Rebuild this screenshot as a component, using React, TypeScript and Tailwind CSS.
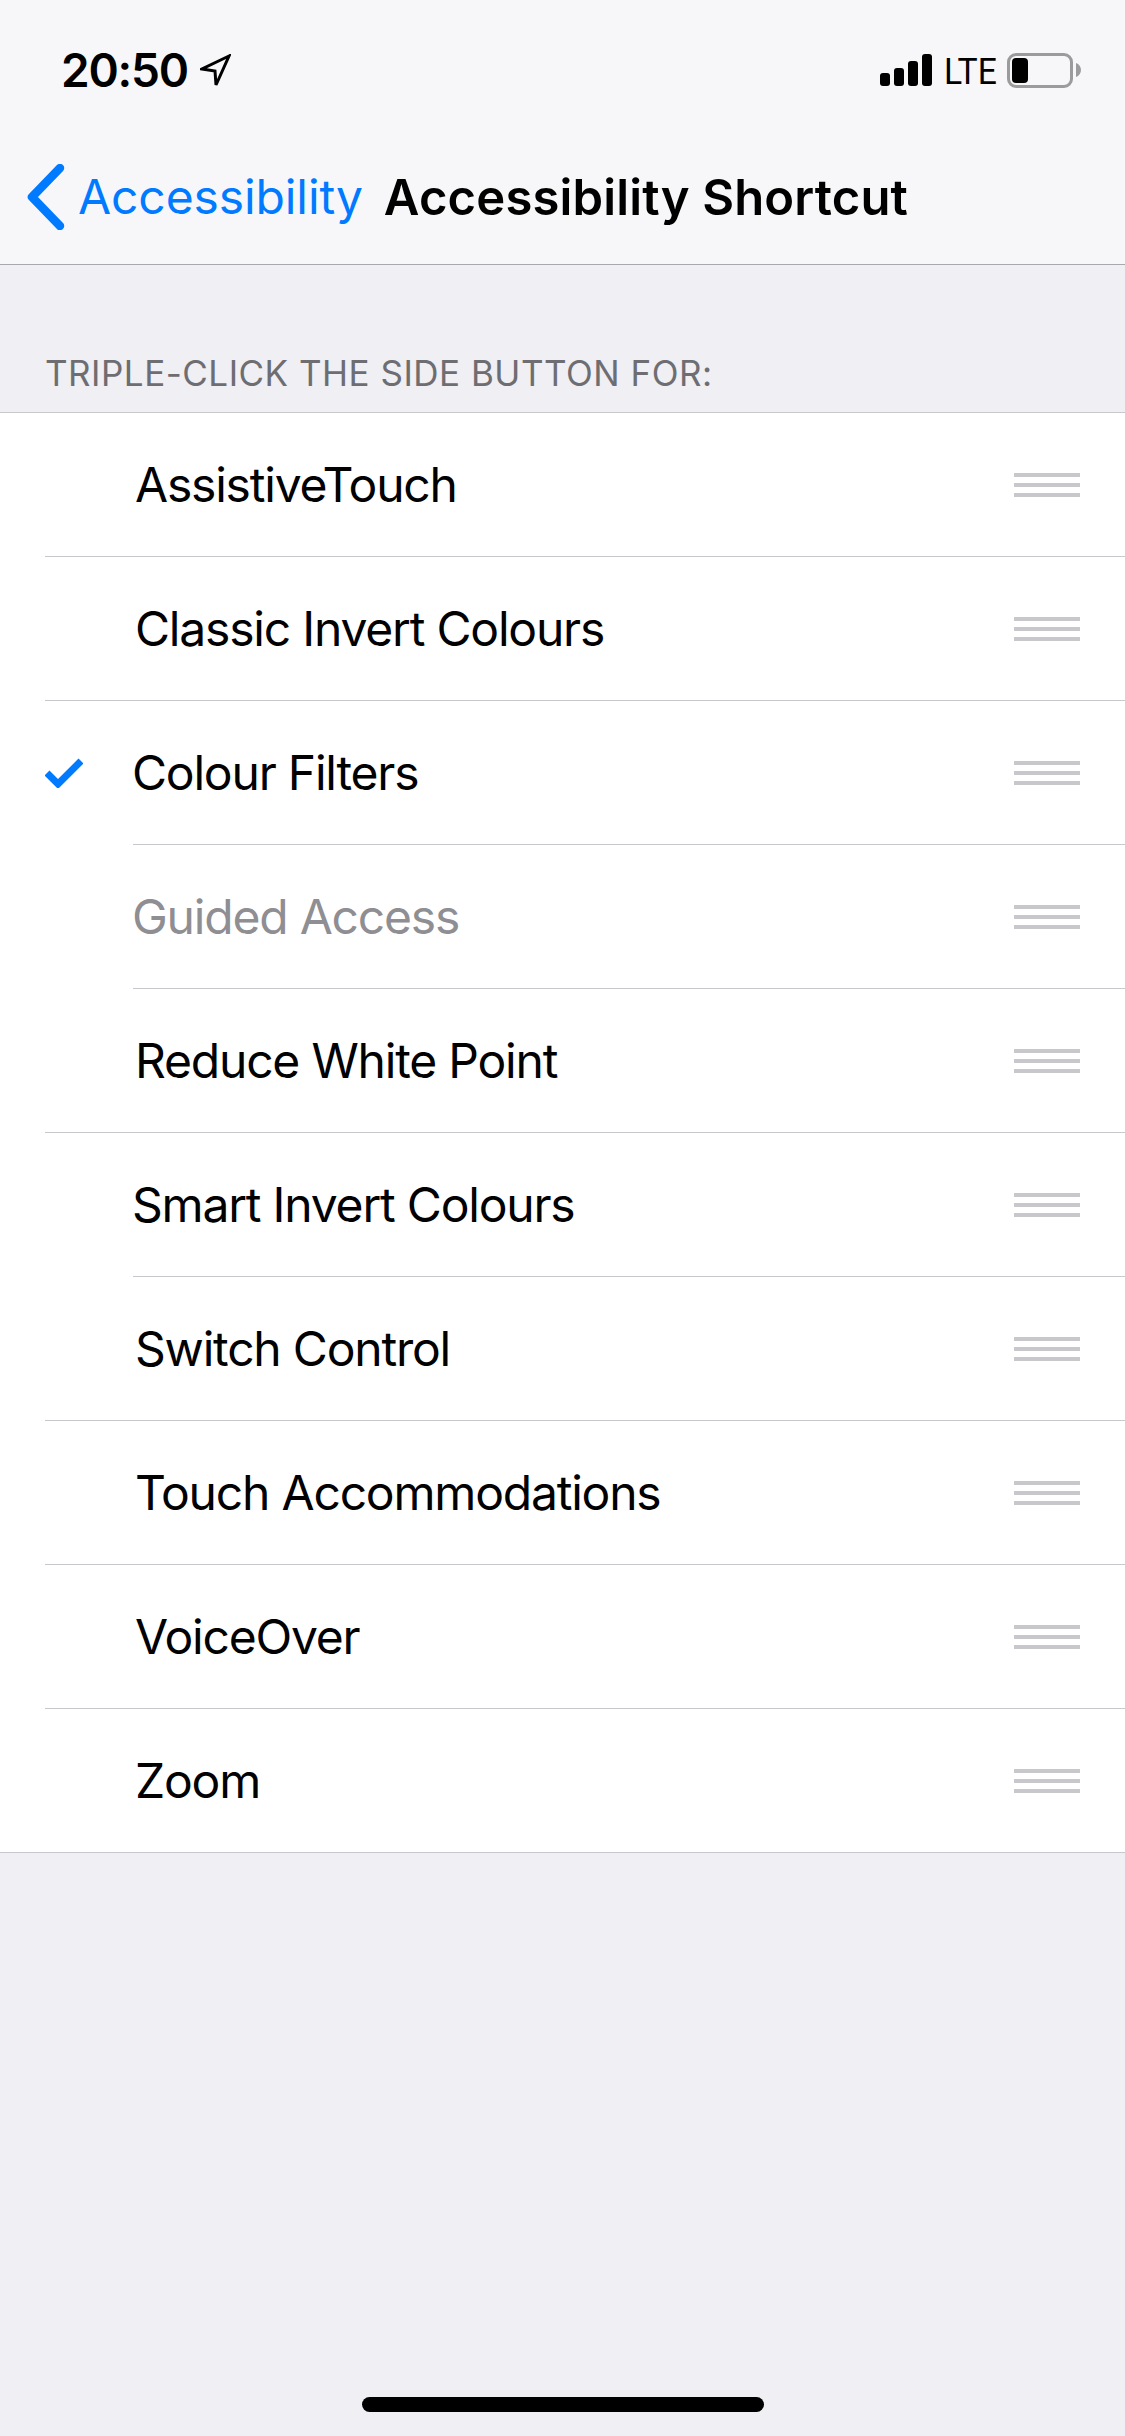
import React from 'react';

interface ShortcutRow {
  label: string;
  gutter: string;
  separator: string;
  checked?: boolean;
  disabled?: boolean;
}

const rows: ShortcutRow[] = [
  { label: 'AssistiveTouch', gutter: 'w-[135px]', separator: 'ml-[45px]' },
  { label: 'Classic Invert Colours', gutter: 'w-[135px]', separator: 'ml-[45px]' },
  { label: 'Colour Filters', gutter: 'w-[132px]', separator: 'ml-[133px]', checked: true },
  { label: 'Guided Access', gutter: 'w-[132px]', separator: 'ml-[133px]', disabled: true },
  { label: 'Reduce White Point', gutter: 'w-[135px]', separator: 'ml-[45px]' },
  { label: 'Smart Invert Colours', gutter: 'w-[132px]', separator: 'ml-[133px]' },
  { label: 'Switch Control', gutter: 'w-[135px]', separator: 'ml-[45px]' },
  { label: 'Touch Accommodations', gutter: 'w-[135px]', separator: 'ml-[45px]' },
  { label: 'VoiceOver', gutter: 'w-[135px]', separator: 'ml-[45px]' },
  { label: 'Zoom', gutter: 'w-[135px]', separator: 'ml-0' },
];

function LocationArrow() {
  return (
    <svg width="31" height="34" viewBox="0 0 31 34" className="ml-[12px] mt-[10px]">
      <path d="M29 2 L2 15 L15 17 L16 31 Z" fill="none" stroke="#000" strokeWidth="3" strokeLinejoin="miter" />
    </svg>
  );
}

function SignalBars() {
  return (
    <div className="flex items-end gap-[4px]">
      <div className="w-[10px] h-[13px] rounded-[3px] bg-black" />
      <div className="w-[10px] h-[18px] rounded-[3px] bg-black" />
      <div className="w-[10px] h-[25px] rounded-[3px] bg-black" />
      <div className="w-[10px] h-[32px] rounded-[3px] bg-black" />
    </div>
  );
}

function Battery() {
  return (
    <div className="flex items-center">
      <div className="w-[66px] h-[35px] rounded-[9px] border-[3px] border-[#9b9b9d] p-[2px]">
        <div className="w-[16px] h-full rounded-[4px] bg-black" />
      </div>
      <svg width="5" height="14" viewBox="0 0 5 14" className="ml-[3px]">
        <path d="M0 0 C3 1 5 4 5 7 C5 10 3 13 0 14 Z" fill="#9b9b9d" />
      </svg>
    </div>
  );
}

function Row({ row }: { row: ShortcutRow }) {
  return (
    <div className="h-[144px] flex flex-col">
      <div className="flex-1 flex items-center">
        <div className={`${row.gutter} shrink-0 pl-[45px]`}>
          {row.checked && (
            <svg width="38" height="30" viewBox="0 0 38 30" className="block">
              <path d="M2 15 L13 26 L36 3" fill="none" stroke="#007aff" strokeWidth="7" />
            </svg>
          )}
        </div>
        <span className={`text-[48px] leading-none tracking-[-1.2px] ${row.disabled ? 'text-[#8e8e93]' : 'text-black'}`}>
          {row.label}
        </span>
        <div className="ml-auto mr-[45px] flex flex-col gap-[6px]">
          <div className="w-[66px] h-[4px] bg-[#c7c7cc]" />
          <div className="w-[66px] h-[4px] bg-[#c7c7cc]" />
          <div className="w-[66px] h-[4px] bg-[#c7c7cc]" />
        </div>
      </div>
      <div className={`h-px bg-[#c8c7cc] ${row.separator}`} />
    </div>
  );
}

export default function App() {
  return (
    <div className="w-[1125px] h-[2436px] flex flex-col bg-[#efeff4] font-['Inter',sans-serif] overflow-hidden">
      {/* Status bar + nav */}
      <header className="h-[265px] shrink-0 bg-[#f7f7f9] border-b border-[#a9a9ad]">
        <div className="h-[132px] flex items-start pt-[44px] pl-[61px] pr-[44px]">
          <div className="flex items-start">
            <span className="text-[46px] leading-[52px] font-semibold tracking-[-1.2px] text-black">20:50</span>
            <LocationArrow />
          </div>
          <div className="ml-auto flex items-center gap-[12px] mt-[6px]">
            <SignalBars />
            <span className="text-[37px] leading-none mt-[3px] text-black font-['Roboto',sans-serif] w-[51px] inline-block origin-left scale-x-[0.91]">LTE</span>
            <Battery />
          </div>
        </div>
        <nav className="h-[132px] flex items-center pl-[27px] pb-[2px]">
          <svg width="38" height="66" viewBox="0 0 38 66" className="block">
            <path d="M33 4 L5 33 L33 62" fill="none" stroke="#007aff" strokeWidth="8.5" strokeLinecap="round" strokeLinejoin="round" />
          </svg>
          <span className="ml-[13px] text-[48px] leading-none tracking-[-0.1px] text-[#007aff]">Accessibility</span>
          <span className="ml-[21px] text-[49px] leading-none font-semibold tracking-[0.15px] text-black">Accessibility Shortcut</span>
        </nav>
      </header>

      {/* Section heading */}
      <div className="h-[147px] shrink-0 flex items-end pl-[45px] pb-[21px]">
        <span className="text-[35px] leading-none tracking-[0.5px] text-[#6d6d72]">TRIPLE-CLICK THE SIDE BUTTON FOR:</span>
      </div>

      {/* Shortcut list */}
      <div className="bg-white border-t border-[#c8c7cc]">
        {rows.map((row) => (
          <Row key={row.label} row={row} />
        ))}
      </div>

      {/* Home indicator */}
      <div className="mt-auto mb-[24px] mx-auto w-[402px] h-[15px] rounded-full bg-black" />
    </div>
  );
}
